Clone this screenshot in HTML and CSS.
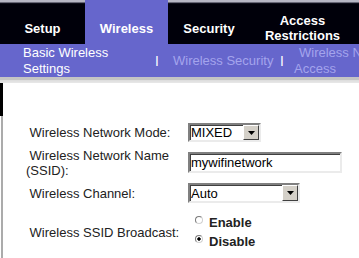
FILE: index.html
```html
<!DOCTYPE html>
<html lang="en">
<head>
<meta charset="utf-8">
<title>Wireless - Basic Wireless Settings</title>
<link rel="stylesheet" href="styles.css">
</head>
<body>
<div class="page">
  <nav class="tabs">
    <div class="tab tab-setup">Setup</div>
    <div class="tab tab-wireless">Wireless</div>
    <div class="tab tab-security">Security</div>
    <div class="tab tab-access">Access<br>Restrictions</div>
    <div class="tab tab-fill"></div>
  </nav>
  <div class="subnav">
    <span class="sub sub-current">Basic Wireless Settings</span>
    <span class="sep">|</span>
    <span class="sub sub-security">Wireless Security</span>
    <span class="sep">|</span>
    <span class="sub sub-access">Wireless Network Access</span>
  </div>
  <div class="band"></div>
  <div class="content">
    <div class="edge"></div>
    <main class="main">
      <form class="form">
        <label class="lbl" for="mode">Wireless Network Mode:</label>
        <div class="ctl">
          <span class="dd dd-mode">
            <select id="mode"><option>MIXED</option></select>
            <span class="dd-btn"><svg width="7" height="4" viewBox="0 0 7 4"><polygon points="0,0 7,0 3.5,4" fill="#000"/></svg></span>
          </span>
        </div>

        <label class="lbl" for="ssid">Wireless Network Name (SSID):</label>
        <div class="ctl"><input id="ssid" class="txt" type="text" value="mywifinetwork"></div>

        <label class="lbl" for="chan">Wireless Channel:</label>
        <div class="ctl">
          <span class="dd dd-chan">
            <select id="chan"><option>Auto</option></select>
            <span class="dd-btn"><svg width="7" height="4" viewBox="0 0 7 4"><polygon points="0,0 7,0 3.5,4" fill="#000"/></svg></span>
          </span>
        </div>

        <span class="lbl">Wireless SSID Broadcast:</span>
        <div class="ctl radios">
          <label class="opt"><input type="radio" name="bc" class="rad"><span>Enable</span></label>
          <label class="opt"><input type="radio" name="bc" class="rad" checked><span>Disable</span></label>
        </div>
      </form>
      <div class="rule"></div>
    </main>
  </div>
</div>
</body>
</html>
```
FILE: styles.css
```css
* { box-sizing: border-box; }
html, body { margin: 0; padding: 0; }
body {
  width: 359px;
  height: 258px;
  overflow: hidden;
  background: #fff;
  font-family: "Liberation Sans", Arial, sans-serif;
  font-size: 13px;
  color: #222;
}

/* top tabs */
.tabs {
  display: flex;
  height: 44px;
  background: #00000a;
}
.tab {
  flex: none;
  display: flex;
  align-items: center;
  justify-content: center;
  text-align: center;
  padding-top: 12px;
  color: #fff;
  font-weight: bold;
  line-height: 15px;
  background: linear-gradient(to bottom, #b6b6c4 0, #b6b6c4 2px, #1a1a2a 3px, #00000a 4px);
}
.tab-setup { width: 85px; }
.tab-wireless { width: 83px; background: #6666cc; }
.tab-security { width: 82px; }
.tab-access { width: 105px; }
.tab-fill { flex: 1; }

/* sub navigation */
.subnav {
  display: flex;
  align-items: center;
  height: 33px;
  background: #6666cc;
  overflow: hidden;
  line-height: 16px;
}
.sub { flex: none; }
.sub-current { width: 150px; padding-left: 23px; color: #fff; }
.sep {
  flex: none;
  width: 14px;
  text-align: center;
  color: #fff;
  font-size: 10px;
  font-weight: bold;
  line-height: 10px;
}
.sub-security { width: 102px; margin-left: 9px; color: #a4a4ec; white-space: nowrap; }
.sub-access { width: 125px; padding-left: 5px; text-indent: 5px; color: #a4a4ec; }

.band {
  height: 6px;
  background: linear-gradient(to bottom, #c4c4c4 0, #c4c4c4 3px, #dcdcdc 3px, #e8e8e8 6px);
}

/* content */
.content { display: flex; }
.edge {
  flex: none;
  width: 3px;
  background:
    linear-gradient(#000 0, #000 33px, transparent 33px),
    linear-gradient(to right, #fff 0, #fff 1px, #ababab 1px, #ababab 3px);
}
.main { flex: 1; padding: 40px 0 0 21px; }

.form {
  display: grid;
  grid-template-columns: 162px 1fr;
  grid-template-rows: 19px 21px 20px 38px;
  row-gap: 10px;
  align-items: center;
  padding-left: 2px;
}
.lbl {
  line-height: 15px;
  text-indent: 3.6px;
  color: #222;
}
.ctl { display: flex; align-items: center; }

/* dropdowns */
.dd { position: relative; display: inline-block; height: 19px; }
.dd-mode { width: 73px; }
.dd-chan { width: 112px; height: 20px; }
.dd select {
  -webkit-appearance: none;
  appearance: none;
  display: block;
  width: 100%;
  height: 100%;
  margin: 0;
  padding: 0 0 0 1px;
  border: 2px solid;
  border-color: #808080 #ebebeb #ebebeb #808080;
  border-radius: 0;
  box-shadow: inset 1px 1px 0 #404040;
  background: #fff;
  font: 13px "Liberation Sans", Arial, sans-serif;
  color: #000;
  outline: none;
}
.dd-btn {
  position: absolute;
  top: 2px;
  right: 2px;
  bottom: 2px;
  width: 16px;
  background: #d4d0c8;
  border: 1px solid;
  border-color: #fff #404040 #404040 #fff;
  display: flex;
  align-items: center;
  justify-content: center;
  pointer-events: none;
}
.dd-btn svg { display: block; }

/* text input */
.txt {
  -webkit-appearance: none;
  appearance: none;
  width: 154px;
  height: 21px;
  margin: 0;
  padding: 0 1px;
  border: 2px solid;
  border-color: #808080 #ebebeb #ebebeb #808080;
  border-radius: 0;
  box-shadow: inset 1px 1px 0 #404040;
  font: 13px "Liberation Sans", Arial, sans-serif;
  color: #000;
  outline: none;
}

/* radios */
.radios { flex-direction: column; align-items: stretch; }
.opt {
  display: flex;
  align-items: center;
  height: 19px;
  font-weight: bold;
  color: #222;
}
.rad {
  -webkit-appearance: none;
  appearance: none;
  flex: none;
  width: 8px;
  height: 8px;
  margin: 0 6px 6px 7px;
  border: 1px solid;
  border-color: #7a7a7a #d0d0d0 #d0d0d0 #7a7a7a;
  border-radius: 50%;
  background: #fff;
}
.rad:checked {
  background: radial-gradient(circle, #000 0, #000 1.4px, #fff 2px);
}

.rule {
  height: 1px;
  margin-top: 7px;
  background: #b4b4d4;
}
```
